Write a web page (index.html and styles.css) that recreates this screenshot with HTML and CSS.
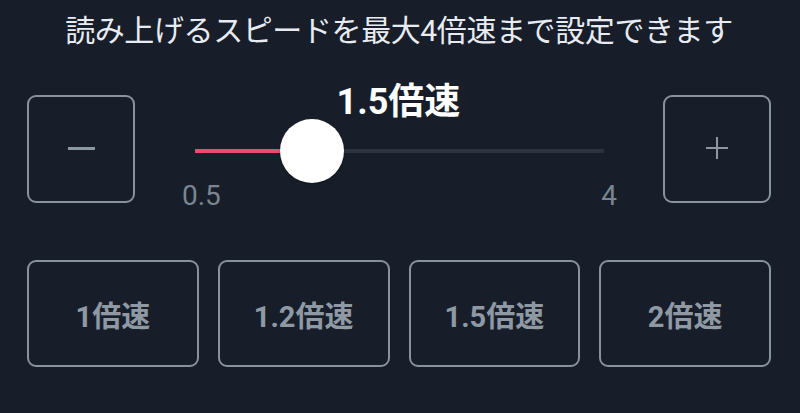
FILE: index.html
```html
<!DOCTYPE html>
<html lang="ja">
<head>
<meta charset="utf-8">
<link rel="stylesheet" href="styles.css">
</head>
<body>
<div class="panel">
  <h1 class="title">読み上げるスピードを最大4倍速まで設定できます</h1>
  <div class="slider-row">
    <button class="step-btn"><span class="minus"></span></button>
    <div class="slider">
      <div class="value">1.5倍速</div>
      <div class="track">
        <div class="fill" style="width: 28.57%"></div>
        <div class="thumb" style="left: 28.57%"></div>
      </div>
      <div class="ticks"><span>0.5</span><span>4</span></div>
    </div>
    <button class="step-btn"><span class="plus"></span></button>
  </div>
  <div class="presets">
    <button class="preset">1倍速</button>
    <button class="preset">1.2倍速</button>
    <button class="preset">1.5倍速</button>
    <button class="preset">2倍速</button>
  </div>
</div>
</body>
</html>
```

FILE: styles.css
```css
html, body {
  margin: 0;
  padding: 0;
  background: #171e29;
}
body {
  width: 800px;
  height: 413px;
  overflow: hidden;
  font-family: Roboto, "Noto Sans CJK JP", sans-serif;
}
.panel {
  padding: 0 29px 0 27px;
}
.title {
  margin: 0;
  padding-top: 11px;
  height: 40px;
  line-height: 40px;
  font-size: 30px;
  font-weight: 400;
  color: #e8ecf2;
  text-align: center;
  letter-spacing: -0.4px;
}
.slider-row {
  display: flex;
  align-items: flex-start;
  margin-top: 31px;
}
.step-btn {
  box-sizing: border-box;
  width: 108px;
  height: 108px;
  margin-top: 13px;
  border: 2px solid #87929e;
  border-radius: 9px;
  background: transparent;
  display: flex;
  align-items: center;
  justify-content: center;
  padding: 0;
  position: relative;
}
.minus {
  display: block;
  width: 27px;
  height: 3px;
  background: #8d97a2;
  margin-top: -2px;
}
.plus {
  display: block;
  width: 22px;
  height: 22px;
  position: relative;
  margin-top: -2px;
}
.plus::before, .plus::after {
  content: "";
  position: absolute;
  background: #8d97a2;
}
.plus::before { left: 0; right: 0; top: 10px; height: 2px; }
.plus::after { top: 0; bottom: 0; left: 10px; width: 2px; }
.slider {
  flex: 1;
  display: flex;
  flex-direction: column;
  padding: 0 59px 0 60px;
}
.value {
  height: 40px;
  line-height: 40px;
  font-size: 36px;
  font-weight: 700;
  color: #ffffff;
  text-align: center;
  margin-left: -120px;
  margin-right: -118px;
}
.track {
  position: relative;
  height: 4px;
  margin-top: 27px;
  background: #2c333e;
}
.fill {
  height: 100%;
  background: #e84c6f;
}
.thumb {
  position: absolute;
  top: 50%;
  width: 64px;
  height: 64px;
  margin-left: -32px;
  margin-top: -32px;
  border-radius: 50%;
  background: #ffffff;
  box-shadow: 0 1px 2px rgba(0,0,0,0.3);
}
.ticks {
  display: flex;
  justify-content: space-between;
  margin: 27px -13px 0 -13px;
  font-size: 28px;
  line-height: 32px;
  color: #7b8591;
}
.presets {
  display: flex;
  gap: 19px;
  margin-top: 48px;
}
.preset {
  box-sizing: border-box;
  flex: 1;
  height: 107px;
  border: 2px solid #87929e;
  border-radius: 9px;
  background: transparent;
  color: #8f99a4;
  font-family: Roboto, "Noto Sans CJK JP", sans-serif;
  font-size: 29px;
  font-weight: 700;
  padding: 0;
}
```
